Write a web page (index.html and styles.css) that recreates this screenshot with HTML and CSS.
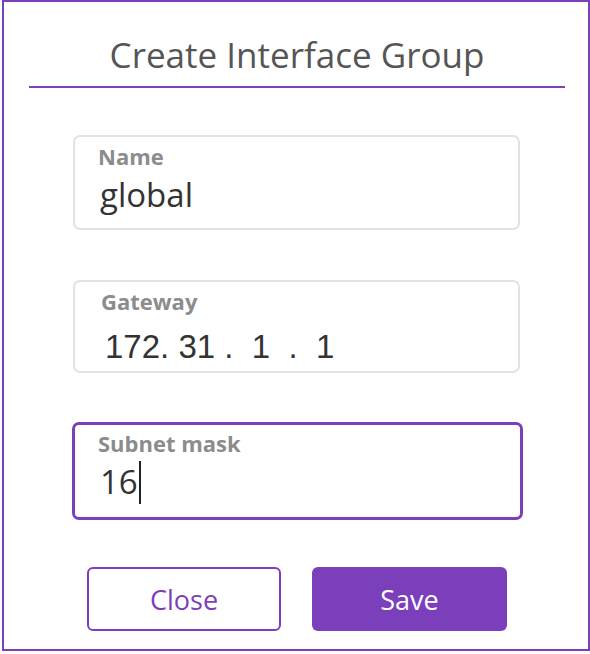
FILE: index.html
```html
<!DOCTYPE html>
<html lang="en">
<head>
<meta charset="utf-8">
<title>Create Interface Group</title>
<link rel="stylesheet" href="styles.css">
</head>
<body>
<div class="dialog">
  <h1 class="title">Create Interface Group</h1>
  <div class="fields">
    <div class="field">
      <div class="label">Name</div>
      <div class="value">global</div>
    </div>
    <div class="field gateway">
      <div class="label">Gateway</div>
      <div class="ip">172. 31 .  1  .  1</div>
    </div>
    <div class="field focused">
      <div class="label">Subnet mask</div>
      <div class="value">16<span class="caret"></span></div>
    </div>
  </div>
  <div class="actions">
    <button class="btn btn-outline" type="button">Close</button>
    <button class="btn btn-primary" type="button">Save</button>
  </div>
</div>
</body>
</html>
```
FILE: styles.css
```css
* { box-sizing: border-box; }
html, body { margin: 0; padding: 0; background: #ffffff; }
body { font-family: "Open Sans", "Noto Sans", sans-serif; }

.dialog {
  margin-left: 2px;
  width: 588px;
  height: 651px;
  border: 2px solid #7b3fbb;
  background: #fff;
}

.title {
  margin: 0 23px 0 25px;
  padding: 31px 0 9px;
  font-size: 35px;
  line-height: 44px;
  font-weight: 400;
  color: #555555;
  text-align: center;
  border-bottom: 2px solid #7b3fbb;
}

.fields {
  display: flex;
  flex-direction: column;
  align-items: flex-start;
  gap: 50px;
  padding-left: 69px;
  margin-top: 47px;
}

.field {
  width: 447px;
  height: 95px;
  border: 2px solid #e2e2e2;
  border-radius: 7px;
  padding: 6px 23px 0;
  display: flex;
  flex-direction: column;
}

.label {
  font-size: 22px;
  line-height: 26px;
  font-weight: 700;
  color: #8c8c8c;
}

.value {
  margin-top: 8px;
  padding-left: 2px;
  font-size: 33px;
  line-height: 36px;
  color: #333333;
}

.gateway {
  height: 93px;
  padding: 6px 23px 0 26px;
}

.ip {
  margin-top: 13px;
  padding-left: 4px;
  font-family: "Liberation Sans", Arial, sans-serif;
  font-size: 33px;
  line-height: 40px;
  color: #333333;
  white-space: pre;
}

.focused {
  margin-left: -1px;
  margin-top: -1px;
  width: 451px;
  height: 98px;
  border: 3px solid #7b3fbb;
  padding: 5px 23px 0;
}

.caret {
  display: inline-block;
  width: 2px;
  height: 43px;
  background: #222222;
  vertical-align: -8px;
  margin: -7px 0 -2px 1px;
}

.actions {
  display: flex;
  gap: 31px;
  padding-left: 83px;
  margin-top: 47px;
}

.btn {
  height: 64px;
  border-radius: 6px;
  font-family: "Open Sans", "Noto Sans", sans-serif;
  font-size: 27px;
  font-weight: 400;
  padding: 0;
  cursor: pointer;
}

.btn-outline {
  width: 194px;
  background: #ffffff;
  color: #7b3fbb;
  border: 2px solid #7b3fbb;
}

.btn-primary {
  width: 195px;
  background: #7b3fbb;
  color: #ffffff;
  border: 0;
}
```
